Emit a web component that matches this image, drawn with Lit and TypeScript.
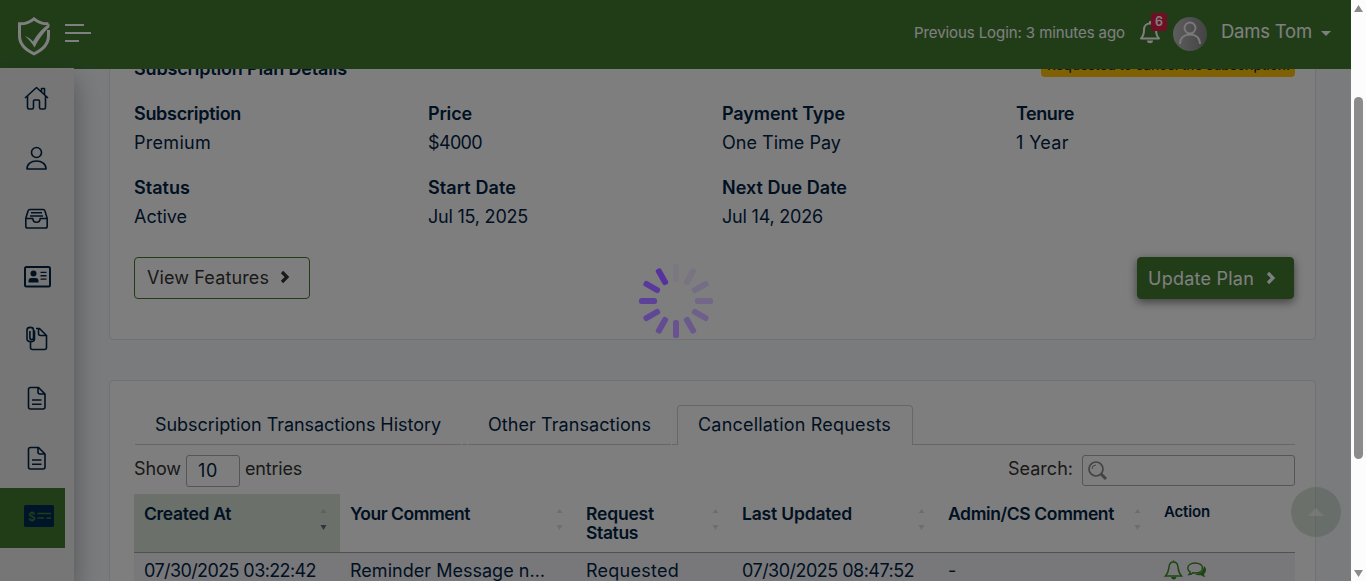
import { LitElement, html, css, svg } from "lit";
import { customElement } from "lit/decorators.js";

const FAMILY = '"Inter"';
const ctx = document.createElement("canvas").getContext("2d")!;

/** Text run tracked so that it takes up the given advance width. */
function run(text: string, width: number, size = 18, weight = 400) {
  ctx.font = `${weight} ${size}px ${FAMILY}`;
  const spacing = (width - 1 - ctx.measureText(text).width) / text.length;
  return html`<span
    class="run"
    style="font-size:${size}px;font-weight:${weight};letter-spacing:${spacing.toFixed(3)}px"
    >${text}</span
  >`;
}

const icons = {
  home: svg`<path d="M1 12 12.500 1.500 24 12M3.500 10v11.500q0 1.500 1.500 1.500h3q1.500 0 1.500-1.500V15q0-1 1-1h4q1 0 1 1v6.500q0 1.500 1.500 1.500h3q1.500 0 1.500-1.500V10M17.500 5.500V2.500h3v6"/>`,
  user: svg`<circle cx="12.500" cy="6.500" r="5"/><path d="M3 23c0-5 4-8 9.500-8S22 18 22 23Z"/>`,
  inbox: svg`<path d="M1.800 12.500 4 5q.4-1.500 2-1.500h13q1.600 0 2 1.500l2.200 7.500v7.700q0 1.800-1.800 1.800H3.600q-1.800 0-1.800-1.800Zm0 0h7c.2 5 7.200 5 7.400 0h7M7 6.800h11M6 10h13"/>`,
  clip: svg`<path d="M12 2.500h3.500l7 7v12q0 2-2 2h-12q-2 0-2-2V15.500M14.500 2.500v5q0 2 2 2h6M10.500 4.500v8.500c0 3.500-7.500 3.500-7.500 0V4c0-3.500 6.500-3.500 6.500 0v8c0 2-3.600 2-3.600 0V5"/>`,
  file: svg`<path d="M4.500 3.500q0-2 2-2h8l6.500 6.500V21q0 2-2 2H6.500q-2 0-2-2Zm9.500-2V6q0 2 2 2h5M8 14h9.500M8 18.200h9.500"/>`,
};

const nav = [icons.home, icons.user, icons.inbox, null, icons.clip, icons.file, icons.file];

const plan: [string, number, string, number][] = [
  ["Subscription", 108, "Premium", 78],
  ["Price", 45, "$4000", 55],
  ["Payment Type", 124, "One Time Pay", 120],
  ["Tenure", 59, "1 Year", 54],
  ["Status", 57, "Active", 54],
  ["Start Date", 89, "Jul 15, 2025", 101],
  ["Next Due Date", 126, "Jul 14, 2026", 102],
];

const columns: [string, number][][] = [
  [["Created At", 88]],
  [["Your Comment", 121]],
  [["Request", 69], ["Status", 53]],
  [["Last Updated", 111]],
  [["Admin/CS Comment", 167]],
];

const cells: [string, number][] = [
  ["07/30/2025 03:22:42", 173],
  ["Reminder Message n…", 196],
  ["Requested", 94],
  ["07/30/2025 08:47:52", 173],
  ["-", 8],
];

const chevron = html`<svg class="chev" width="10" height="14" viewBox="0 0 10 14">
  <path d="M2 2l5 5-5 5" fill="none" stroke="currentColor" stroke-width="3.200" />
</svg>`;

@customElement("app-root")
export class AppRoot extends LitElement {
  static styles = css`
    :host {
      display: flex;
      position: relative;
      width: 1366px;
      height: 581px;
      overflow: hidden;
      font-family: "Inter", sans-serif;
      color: #012345;
    }
    * { box-sizing: border-box; }
    svg { display: block; flex: none; }
    .run { white-space: nowrap; }
    .page { width: 1351px; display: flex; flex-direction: column; background: #f5f7fa; }
    header {
      height: 69px; flex: none; display: flex; align-items: flex-start;
      background: #417a31; color: #fff; z-index: 1; line-height: 24px;
    }
    .logo { margin: 16px 0 0 17px; }
    .burger { margin: 23px auto 0 13px; }
    .login { padding-top: 20px; }
    .bell { position: relative; margin: 20px 0 0 14px; }
    .badge {
      position: absolute; left: 12px; top: -7px; width: 16px; height: 18px; border-radius: 3px;
      background: #e11d48; font-size: 12.500px; font-weight: 600; line-height: 17px; text-align: center;
    }
    .avatar { margin: 17px 14px 0 12px; }
    .name { padding-top: 19px; }
    .caret { margin: 31px 20px 0 9px; }
    .body { flex: 1; min-height: 0; display: flex; }
    nav {
      width: 74px; flex: none; margin-top: -1px; background: #ededed; z-index: 2;
      display: flex; flex-direction: column; box-shadow: 0 12px 26px rgba(0, 0, 0, 0.34);
    }
    .item { height: 60px; display: flex; align-items: center; padding-left: 24px; }
    .item.wide { padding-bottom: 2px; }
    .item.active { width: 65px; background: #417a31; padding-bottom: 4px; }
    main { flex: 1; min-width: 0; height: 512px; overflow: hidden; padding: 0 35px; }
    .card { border: 1px solid #e0e3e6; border-radius: 4px; background: #fdfdfd; padding: 0 20px 0 24px; }
    .plan { height: 291px; margin-top: -20px; display: flex; flex-direction: column; }
    .title { display: flex; justify-content: space-between; height: 56px; line-height: 24px; padding-top: 7px; }
    .tag {
      height: 24px; margin-top: -4px; padding-left: 6px; width: 254px;
      background: #ffc107; color: #212529; border-radius: 4px; line-height: 22px;
    }
    .facts { display: grid; grid-template-columns: repeat(4, 294px); grid-auto-rows: 74px; line-height: 29px; margin-top: -7px; }
    .facts div { display: flex; flex-direction: column; }
    .buttons { display: flex; justify-content: space-between; margin-top: 10px; padding-right: 1px; }
    button {
      display: flex; align-items: center; height: 42px; border-radius: 4px; font-family: inherit;
      gap: 11px; padding: 0 19px 2px 12px; color: #333; background: none; border: 1px solid #417a31;
    }
    .view { width: 176px; }
    .update { width: 157px; padding: 0 0 0 10px; gap: 12px; color: #fff; background: #417a31; box-shadow: 0 3px 10px rgba(0, 0, 0, 0.5); }
    .requests { height: 230px; margin-top: 40px; padding-top: 24px; }
    .tabs { display: flex; gap: 5px; height: 40px; border-bottom: 1px solid #cfcfcf; line-height: 24px; }
    .tab { height: 40px; padding: 7px 0 0 20px; border: 1px solid #fff; border-radius: 4px 4px 0 0; border-bottom: 0; }
    .tab.on { border-color: #cfcfcf; background: #fdfdfd; }
    .tools { display: flex; height: 49px; padding-top: 10px; color: #333; line-height: 28px; }
    .select { width: 54px; height: 32px; margin: 0 5px; padding-left: 11px; border: 1px solid #aaa; border-radius: 3px; line-height: 30px; color: #012345; }
    .search { margin-left: auto; }
    .field { width: 213px; height: 31px; margin-left: 9px; border: 1px solid #aaa; border-radius: 3px; padding: 5px 0 0 5px; }
    .table { display: grid; grid-template-columns: 206px 236px 156px 206px 216px 141px; }
    .th { height: 59px; padding: 10px 10px 0; border-bottom: 1px solid #a2a2a4; display: flex; justify-content: space-between; line-height: 19px; }
    .th.sorted { background: #d7e2d5; }
    .th.plain { padding-top: 8px; }
    .lines { display: flex; flex-direction: column; }
    .sort { margin: 4px 1px 0 0; }
    .td { height: 36px; padding: 3px 10px 0; background: #f0f1f4; line-height: 30px; display: flex; gap: 4px; }
    .overlay { position: absolute; left: 0; top: 0; width: 1351px; height: 581px; background: rgba(0, 0, 0, 0.5); z-index: 5; }
    .top { position: absolute; left: 1291px; top: 487px; z-index: 3; }
    .spinner { position: absolute; left: 636px; top: 261px; z-index: 6; }
    .scroll { width: 15px; height: 581px; background: #fcfcfc; display: flex; flex-direction: column; align-items: center; }
    .thumb { width: 9px; height: 362px; margin: 84px 0 auto; border-radius: 5px; background: #8b8b8b; }
    .up { margin-top: 5px; }
    .down { margin-bottom: 4px; }
  `;

  private get header() {
    return html`<header>
      <svg class="logo" width="34" height="40" viewBox="0 0 34 40">
        <path d="M31.500 14v5.500c0 9-6 14.500-14.500 18.300C8.500 34 2.500 28.500 2.500 19.500V7.800C8 8 12.500 6.500 17 2.800 21.500 6.500 26 8 31.500 7.800" fill="none" stroke="#fff" stroke-width="3"/>
        <path d="M8 20c3.200 1 5.800 3 8 5.500C20 18 25.500 12.500 32.500 7.500V11C26 17 21.500 23.500 17.500 31.500 15 27 11.500 23 8 20Z" fill="#fff"/>
      </svg>
      <svg class="burger" width="27" height="20" viewBox="0 0 27 20">
        <path d="M1 2h19M1 10h26M1 18h14" fill="none" stroke="#fff" stroke-width="2"/>
      </svg>
      <div class="login">${run("Previous Login: 3 minutes ago", 212, 15)}</div>
      <div class="bell">
        <svg width="22" height="24" viewBox="0 0 22 24">
          <path d="M2 18.500h18c-2.500-2.500-3-4-3-9 0-3.500-2.500-6-6-6s-6 2.500-6 6c0 5-.5 6.500-3 9ZM11 3.500V1" fill="none" stroke="#fff" stroke-width="2" stroke-linejoin="round"/>
          <path d="M8 20.500h6a3 2.800 0 0 1-6 0Z" fill="#fff"/>
        </svg>
        <div class="badge">6</div>
      </div>
      <svg class="avatar" width="34" height="34" viewBox="0 0 34 34">
        <defs><linearGradient id="g"><stop stop-color="#bbb"/><stop offset="1" stop-color="#888"/></linearGradient></defs>
        <circle cx="17" cy="17" r="17" fill="url(#g)"/>
        <circle cx="17" cy="11" r="5.500" fill="none" stroke="#f4f4f4" stroke-width="1.800"/>
        <path d="M7 27c0-6 4-9.500 10-9.500S27 21 27 27" fill="none" stroke="#f4f4f4" stroke-width="1.800"/>
      </svg>
      <div class="name">${run("Dams Tom", 92, 18.5)}</div>
      <svg class="caret" width="10" height="5"><path d="M0 0h10L5 5Z" fill="#fff"/></svg>
    </header>`;
  }

  private get sidebar() {
    return html`<nav>
      ${nav.map((icon) =>
        icon
          ? html`<div class="item"><svg width="25" height="25" viewBox="0 0 25 25" fill="none" stroke="#012345" stroke-width="1.600" stroke-linejoin="round">${icon}</svg></div>`
          : html`<div class="item wide"><svg width="27" height="25" viewBox="0 0 27 25">
              <rect x="1" y="2" width="25" height="19.500" rx="1.500" fill="none" stroke="#012345" stroke-width="2"/>
              <circle cx="9.500" cy="8.500" r="3" fill="#012345"/>
              <path d="M4.500 17.500V16q0-3 3-3h4q3 0 3 3v1.500ZM16.500 6.700h6v1.300h-6ZM16.500 10.100h6v1.300h-6ZM16.500 13.500h6v1.300h-6Z" fill="#012345"/>
            </svg></div>`
      )}
      <div class="item active"><svg width="30" height="26" viewBox="0 0 30 26">
        <rect y="2" width="30" height="22" rx="1.500" fill="#012b55"/>
        <text x="4" y="17.500" font-family="Inter" font-size="12" font-weight="600" fill="#417a31">$</text>
        <path d="M13.500 10.500H27M13.500 15h6.500M22.500 15H27" stroke="#417a31" stroke-width="1.300"/>
      </svg></div>
    </nav>`;
  }

  private get planCard() {
    return html`<section class="card plan">
      <div class="title">
        ${run("Subscription Plan Details", 214, 18, 600)}
        <div class="tag">${run("Requested to cancel the subscription.", 244, 13.5, 500)}</div>
      </div>
      <div class="facts">
        ${plan.map(([k, kw, v, vw]) => html`<div>${run(k, kw, 18, 600)}${run(v, vw)}</div>`)}
      </div>
      <div class="buttons">
        <button class="view">${run("View Features", 123)}${chevron}</button>
        <button class="update">${run("Update Plan", 107)}${chevron}</button>
      </div>
    </section>`;
  }

  private get requestsCard() {
    return html`<section class="card requests">
      <div class="tabs">
        <div class="tab" style="width:328px">${run("Subscription Transactions History", 287)}</div>
        <div class="tab" style="width:205px">${run("Other Transactions", 164)}</div>
        <div class="tab on" style="width:236px">${run("Cancellation Requests", 194)}</div>
      </div>
      <div class="tools">
        ${run("Show", 48)}
        <div class="select">${run("10", 21)}</div>
        ${run("entries", 58)}
        <div class="search">${run("Search:", 66)}</div>
        <div class="field"><svg width="20" height="20" viewBox="0 0 20 20" fill="none" stroke="#888">
          <circle cx="8" cy="8" r="7" stroke-width="1.700"/><path d="M13 13l5 5" stroke-width="3"/><path d="M4 8q0-4 4-4"/>
        </svg></div>
      </div>
      <div class="table">
        ${columns.map((lines, i) => html`<div class="th ${i === 0 ? "sorted" : ""}">
          <div class="lines">${lines.map(([t, w]) => run(t, w, 17.5, 600))}</div>
          <svg class="sort" width="10" height="23" viewBox="0 0 10 23">
            <path d="M1.500 5h6L4.500 1Z" fill="#012345" opacity=".15"/>
            <path d="M1.500 17h6l-3 5Z" fill="#012345" opacity="${i === 0 ? 0.6 : 0.15}"/>
          </svg>
        </div>`)}
        <div class="th plain">${run("Action", 47, 15, 600)}</div>
        ${cells.map(([t, w]) => html`<div class="td">${run(t, w)}</div>`)}
        <div class="td">
          <svg width="19" height="26" viewBox="0 0 19 26">
            <path d="M1.500 20h16c-3-3-3-5-3.500-9C13.700 7.500 12 6 9.500 6S5.300 7.500 5 11c-.5 4-.5 6-3.500 9ZM9.500 6V4.500" fill="none" stroke="#3b8a23" stroke-width="1.500"/>
            <path d="M7 21h5.500q-.6 2.500-2.700 2.500T7 21Z" fill="#3b8a23"/>
          </svg>
          <svg width="20" height="26" viewBox="0 0 20 26">
            <path d="M8 7c4.500 0 7.500 2.200 7.500 5s-3 5-7.500 5l-2-.2Q4.500 18.500 2 18.500q1.300-1.200 1.200-2.700C1.500 15 .8 13.500.8 12c0-2.800 3-5 7.200-5Z" fill="none" stroke="#3b8a23" stroke-width="1.400"/>
            <path d="M17 10c3 2.500 2.500 6 0 8q0 1.500 1.500 3-2.500 0-4.500-1.800-4 .5-6-1.200 8.500-.3 9-8Z" fill="#3b8a23"/>
          </svg>
        </div>
      </div>
    </section>`;
  }

  render() {
    return html`
      <div class="page">
        ${this.header}
        <div class="body">
          ${this.sidebar}
          <main>${this.planCard}${this.requestsCard}</main>
        </div>
      </div>
      <div class="scroll">
        <svg class="up" width="9" height="8"><path d="M4.500 0 9 7H0Z" fill="#8b8b8b"/></svg>
        <div class="thumb"></div>
        <svg class="down" width="9" height="8"><path d="M0 1h9L4.500 8Z" fill="#8b8b8b"/></svg>
      </div>
      <svg class="top" width="50" height="50">
        <circle cx="25" cy="25" r="25" fill="#417a31" opacity=".2"/>
        <path d="M17 29h16l-8-8Z" fill="#fff" opacity=".6"/>
      </svg>
      <div class="overlay"></div>
      <svg class="spinner" width="80" height="80" viewBox="-40 -40 80 80">
        ${Array.from({ length: 12 }, (_, i) => svg`<rect x="-3" y="-37" width="6" height="18" rx="2.500" fill="#55309f"
          opacity="${i === 0 ? 0.05 : (0.04 + i * 0.085).toFixed(3)}" transform="rotate(${i * 30})"/>`)}
      </svg>
    `;
  }
}
